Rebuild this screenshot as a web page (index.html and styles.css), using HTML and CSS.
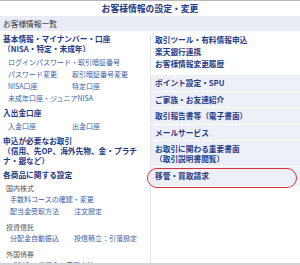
FILE: index.html
```html
<!DOCTYPE html>
<html lang="ja">

<head>
    <meta charset="UTF-8">
    <meta name="viewport" content="width=device-width, initial-scale=1.0">
    <title>お客様情報の設定・変更</title>
    <link rel="stylesheet" href="styles.css">
</head>

<body>
    <div class="page">
        <h1 class="title">お客様情報の設定・変更</h1>
        <div class="band">お客様情報一覧</div>
        <div class="cols">
            <div class="left">
                <div class="sec">
                    <a class="head">基本情報・マイナンバー・口座<br>（NISA・特定・未成年）</a>
                    <div class="items">
                        <a class="item">ログインパスワード・取引暗証番号</a>
                        <div class="pair sub">
                            <a class="item">パスワード変更</a>
                            <a class="item">取引暗証番号変更</a>
                        </div>
                        <div class="pair">
                            <a class="item">NISA口座</a>
                            <a class="item">特定口座</a>
                        </div>
                        <a class="item">未成年口座・ジュニアNISA</a>
                    </div>
                </div>
                <div class="sec">
                    <a class="head">入出金口座</a>
                    <div class="items">
                        <div class="pair sub">
                            <a class="item">入金口座</a>
                            <a class="item">出金口座</a>
                        </div>
                    </div>
                </div>
                <div class="sec">
                    <a class="head">申込が必要なお取引<br>（信用、先OP、海外先物、金・プラチ<br>ナ・銀など）</a>
                </div>
                <div class="sec">
                    <a class="head">各商品に関する設定</a>
                    <div class="group">
                        <div class="label">国内株式</div>
                        <a class="item sub">手数料コースの確認・変更</a>
                        <div class="pair sub">
                            <a class="item">配当金受取方法</a>
                            <a class="item">注文設定</a>
                        </div>
                    </div>
                    <div class="group">
                        <div class="label">投資信託</div>
                        <div class="pair sub">
                            <a class="item">分配金自動振込</a>
                            <a class="item">投信積立：引落設定</a>
                        </div>
                    </div>
                    <div class="group">
                        <div class="label">外国債券</div>
                        <a class="item sub">「利金・償還金」受取方法</a>
                    </div>
                </div>
            </div>
            <div class="right">
                <div class="plain">
                    <a class="link">取引ツール・有料情報申込</a>
                    <a class="link">楽天銀行連携</a>
                    <a class="link">お客様情報変更履歴</a>
                </div>
                <a class="row">ポイント設定・SPU</a>
                <a class="row">ご家族・お友達紹介</a>
                <a class="row">取引報告書等（電子書面）</a>
                <a class="row">メールサービス</a>
                <a class="row">お取引に関わる重要書面<br>（取引説明書閲覧）</a>
                <a class="row marked">移管・買取請求</a>
            </div>
        </div>
    </div>
</body>

</html>
```

FILE: styles.css
```css
body {
    margin: 0;
    background-color: #fff;
    font-family: "Noto Sans CJK JP", "Noto Sans", sans-serif;
}

a {
    display: block;
    text-decoration: none;
}

.page {
    width: 300px;
    height: 262px;
    overflow: hidden;
    border-top: 1px solid #b9b9b9;
    border-bottom: 2px solid #d4d4d4;
}

.title {
    margin: 0;
    height: 15px;
    line-height: 15px;
    font-size: 8.8px;
    text-align: center;
    color: #1f3a86;
}

.band {
    height: 15px;
    line-height: 15px;
    padding-left: 3px;
    font-size: 7.7px;
    color: #333;
    background-color: #e9ecf4;
}

.cols {
    display: grid;
    grid-template-columns: 150px 1fr;
    margin-top: 3px;
}

/* left column */
.left {
    padding-left: 3px;
}

.sec {
    margin-bottom: 4px;
}

.head {
    font-size: 7.7px;
    line-height: 10px;
    font-weight: bold;
    color: #1f3a86;
}

.items {
    margin-top: 2px;
    padding-left: 5px;
}

.item {
    font-size: 7px;
    line-height: 12px;
    color: #3d5ea8;
}

.pair {
    display: grid;
    grid-template-columns: 64px auto;
}

.sub {
    padding-left: 3px;
}

.items .pair.sub {
    padding-left: 0;
}

.group {
    margin-top: 5px;
    padding-left: 3px;
}

.sec .group:first-of-type {
    margin-top: 3px;
}

.label {
    font-size: 7px;
    line-height: 10px;
    color: #555;
}

.group .sub {
    padding-left: 4px;
}

/* right column */
.right {
    border-left: 1px solid #e2e4ea;
}

.plain {
    padding: 0 0 4px;
}

.link,
.row {
    padding-left: 4px;
    font-size: 7.7px;
    font-weight: bold;
    color: #1f3a86;
}

.link {
    line-height: 12px;
}

.row {
    padding-top: 3px;
    padding-bottom: 3px;
    line-height: 9.5px;
    background-color: #eef0f8;
    border-top: 1px solid #fff;
}

.marked {
    position: relative;
    padding-top: 4px;
    padding-bottom: 5px;
}

.marked::after {
    content: "";
    position: absolute;
    left: -4px;
    right: 3px;
    top: 1px;
    bottom: -2px;
    border: 1.5px solid #d8303a;
    border-radius: 10px;
}
```
